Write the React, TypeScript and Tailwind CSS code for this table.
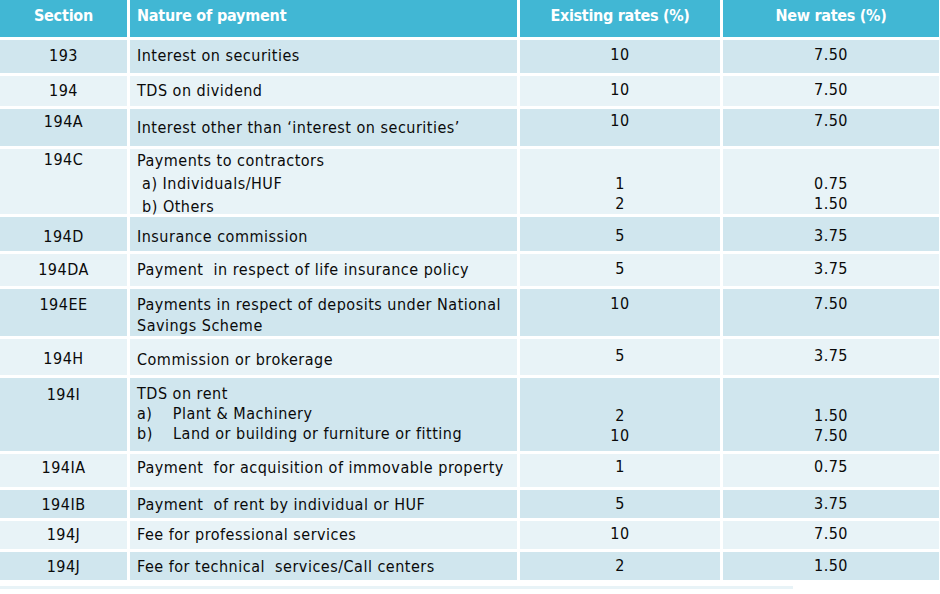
const font = { fontFamily: '"DejaVu Sans Condensed", "DejaVu Sans", sans-serif' };

type Row = {
  section: string;
  nature: string[];
  existing: string[];
  newRate: string[];
  h: string;
  pt: string;
  ptN: string;
  ptR: string;
  lh: string;
  dark: boolean;
};

const rows: Row[] = [
  { section: "193", nature: ["Interest on securities"], existing: ["10"], newRate: ["7.50"], h: "h-[33px]", pt: "pt-[5px]", ptN: "pt-[5px]", ptR: "pt-[5px]", lh: "leading-[21px]", dark: true },
  { section: "194", nature: ["TDS on dividend"], existing: ["10"], newRate: ["7.50"], h: "h-[30px]", pt: "pt-[4px]", ptN: "pt-[4px]", ptR: "pt-[4px]", lh: "leading-[21px]", dark: false },
  { section: "194A", nature: ["Interest other than \u2018interest on securities\u2019"], existing: ["10"], newRate: ["7.50"], h: "h-[37px]", pt: "pt-[2px]", ptN: "pt-[8px]", ptR: "pt-[2px]", lh: "leading-[21px]", dark: true },
  { section: "194C", nature: ["Payments to contractors", "\u00a0a) Individuals/HUF", "\u00a0b) Others"], existing: ["1", "2"], newRate: ["0.75", "1.50"], h: "h-[65px]", pt: "pt-[0px]", ptN: "pt-[0px]", ptR: "pt-[25px]", lh: "leading-[23px]", dark: false },
  { section: "194D", nature: ["Insurance commission"], existing: ["5"], newRate: ["3.75"], h: "h-[34px]", pt: "pt-[9px]", ptN: "pt-[9px]", ptR: "pt-[9px]", lh: "leading-[21px]", dark: true },
  { section: "194DA", nature: ["Payment  in respect of life insurance policy"], existing: ["5"], newRate: ["3.75"], h: "h-[32px]", pt: "pt-[5px]", ptN: "pt-[5px]", ptR: "pt-[5px]", lh: "leading-[21px]", dark: false },
  { section: "194EE", nature: ["Payments in respect of deposits under National", "Savings Scheme"], existing: ["10"], newRate: ["7.50"], h: "h-[47px]", pt: "pt-[5px]", ptN: "pt-[5px]", ptR: "pt-[5px]", lh: "leading-[21px]", dark: true },
  { section: "194H", nature: ["Commission or brokerage"], existing: ["5"], newRate: ["3.75"], h: "h-[36px]", pt: "pt-[9px]", ptN: "pt-[10px]", ptR: "pt-[7px]", lh: "leading-[21px]", dark: false },
  { section: "194I", nature: ["TDS on rent", "a)\u00a0\u00a0\u00a0 Plant & Machinery", "b)\u00a0\u00a0\u00a0 Land or building or furniture or fitting"], existing: ["2", "10"], newRate: ["1.50", "7.50"], h: "h-[73px]", pt: "pt-[6px]", ptN: "pt-[6px]", ptR: "pt-[28px]", lh: "leading-[20px]", dark: true },
  { section: "194IA", nature: ["Payment  for acquisition of immovable property"], existing: ["1"], newRate: ["0.75"], h: "h-[33px]", pt: "pt-[3px]", ptN: "pt-[3px]", ptR: "pt-[3px]", lh: "leading-[21px]", dark: false },
  { section: "194IB", nature: ["Payment  of rent by individual or HUF"], existing: ["5"], newRate: ["3.75"], h: "h-[28px]", pt: "pt-[4px]", ptN: "pt-[4px]", ptR: "pt-[4px]", lh: "leading-[21px]", dark: true },
  { section: "194J", nature: ["Fee for professional services"], existing: ["10"], newRate: ["7.50"], h: "h-[28px]", pt: "pt-[3px]", ptN: "pt-[3px]", ptR: "pt-[3px]", lh: "leading-[21px]", dark: false },
  { section: "194J", nature: ["Fee for technical  services/Call centers"], existing: ["2"], newRate: ["1.50"], h: "h-[28px]", pt: "pt-[4px]", ptN: "pt-[4px]", ptR: "pt-[4px]", lh: "leading-[21px]", dark: true },
];

export default function App() {
  return (
    <div className="w-[940px] h-[594px] bg-white overflow-hidden text-[16px] text-[#0a0a0a]" style={font}>
      <div className="w-[938px] grid grid-cols-[127px_387px_200px_216px] gap-[3px]">
        {/* header */}
        <div className="h-[37px] bg-[#41b7d4] text-white font-bold text-center pt-[5px] leading-[21px] tracking-[-0.2px]">Section</div>
        <div className="h-[37px] bg-[#41b7d4] text-white font-bold pl-[7px] pt-[5px] leading-[21px] tracking-[-0.2px]">Nature of payment</div>
        <div className="h-[37px] bg-[#41b7d4] text-white font-bold text-center pt-[5px] leading-[21px] tracking-[-0.3px]">Existing rates (%)</div>
        <div className="h-[37px] bg-[#41b7d4] text-white font-bold text-center pt-[5px] leading-[21px] tracking-[-0.3px]">New rates (%)</div>

        {rows.map((r, i) => {
          const bg = r.dark ? "bg-[#d0e6ee]" : "bg-[#e8f3f7]";
          return (
            <div key={i} className="contents">
              <div className={`${r.h} ${bg} ${r.pt} text-center leading-[21px] tracking-[0.5px]`}>{r.section}</div>
              <div className={`${r.h} ${bg} ${r.ptN} ${r.lh} pl-[7px] whitespace-pre tracking-[0.5px]`}>
                {r.nature.map((t, j) => (
                  <div key={j}>{t}</div>
                ))}
              </div>
              <div className={`${r.h} ${bg} ${r.ptR} leading-[20px] text-center tracking-[0.5px]`}>
                {r.existing.map((t, j) => (
                  <div key={j}>{t}</div>
                ))}
              </div>
              <div className={`${r.h} ${bg} ${r.ptR} leading-[20px] text-center tracking-[0.5px]`}>
                {r.newRate.map((t, j) => (
                  <div key={j}>{t}</div>
                ))}
              </div>
            </div>
          );
        })}
      </div>
      <div className="mt-[6px] w-[793px] h-[3px] bg-[#e8f3f7]" />
    </div>
  );
}
